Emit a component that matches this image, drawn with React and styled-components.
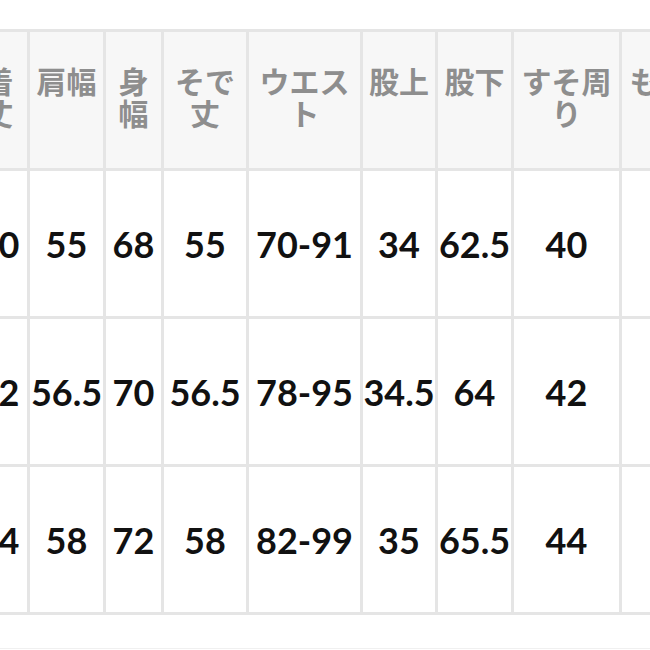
import React from "react"
import styled, { createGlobalStyle } from 'styled-components'

const GlobalStyle = createGlobalStyle`
  html, body {
    margin: 0;
    padding: 0;
    background: #fff;
  }
`

const Page = styled.div`
  width: 650px;
  height: 650px;
  overflow: hidden;
  padding-top: 29px;
  box-sizing: border-box;
  background: #fff;
`

const Table = styled.table`
  margin-left: -33px;
  border-collapse: collapse;
  table-layout: fixed;
  width: 760px;
`

// widths are given as the column pitch; padding + border are taken off
const HeadCell = styled.th`
  width: ${p => p.$w - 7}px;
  height: 104px;
  padding: 32px 2px 0;
  vertical-align: top;
  border: 3px solid #e5e5e5;
  background: #f7f7f7;
  color: #8e8e8e;
  font-family: "Noto Sans CJK JP", "Noto Sans", sans-serif;
  font-weight: 700;
  font-size: 30px;
  line-height: 32px;
  text-align: center;
  word-break: break-all;
`

const Cell = styled.td`
  height: 145px;
  padding: 0;
  border: 3px solid #e5e5e5;
  background: #fff;
  color: #111;
  font-family: Lato, "Liberation Sans", sans-serif;
  font-weight: 700;
  font-size: 36px;
  text-align: center;
  vertical-align: middle;
  white-space: nowrap;
`

const Rule = styled.div`
  margin-top: 33px;
  height: 1px;
  background: #f0f0f0;
`

const columns = [
  { label: '着丈', w: 60 },
  { label: '肩幅', w: 76 },
  { label: '身幅', w: 58 },
  { label: 'そで丈', w: 85 },
  { label: 'ウエスト', w: 114 },
  { label: '股上', w: 75 },
  { label: '股下', w: 76 },
  { label: 'すそ周り', w: 108 },
  { label: 'もも周り', w: 108 },
]

const rows = [
  ['70', '55', '68', '55', '70-91', '34', '62.5', '40', '60'],
  ['72', '56.5', '70', '56.5', '78-95', '34.5', '64', '42', '62'],
  ['74', '58', '72', '58', '82-99', '35', '65.5', '44', '64'],
]

const App = () => {
  return (
    <Page>
      <GlobalStyle />
      <Table>
        <thead>
          <tr>
            {columns.map(c => (
              <HeadCell key={c.label} $w={c.w}>{c.label}</HeadCell>
            ))}
          </tr>
        </thead>
        <tbody>
          {rows.map((r, i) => (
            <tr key={i}>
              {r.map((v, j) => <Cell key={j}>{v}</Cell>)}
            </tr>
          ))}
        </tbody>
      </Table>
      <Rule />
    </Page>
  )
}

export default App
